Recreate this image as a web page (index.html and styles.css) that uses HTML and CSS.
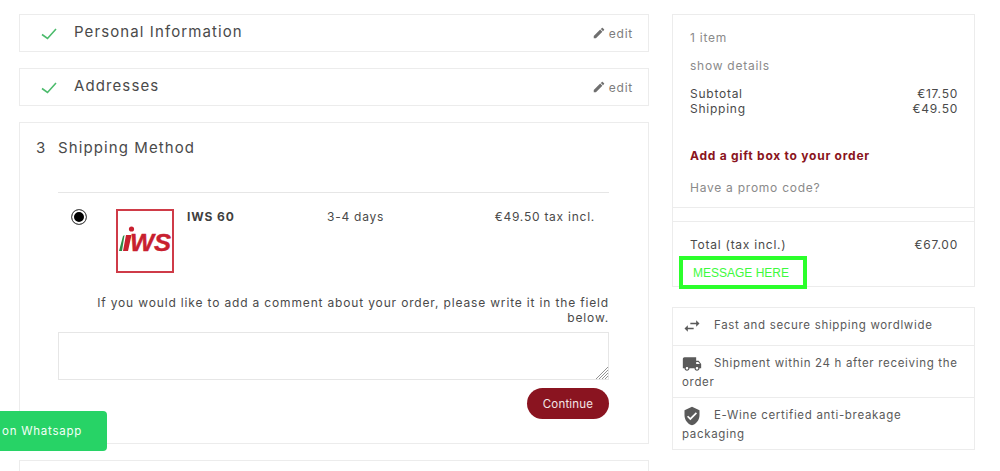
FILE: index.html
```html
<!DOCTYPE html>
<html lang="en">
<head>
    <meta charset="UTF-8">
    <meta name="viewport" content="width=device-width, initial-scale=1.0">
    <title>Checkout</title>
    <link rel="stylesheet" href="styles.css">
</head>
<body>
    <div class="checkout">
        <div class="steps">
            <section class="step step-done">
                <svg class="check" viewBox="0 0 16 12"><polyline points="1,6.5 6.5,10.5 15,1"/></svg>
                <h2>Personal Information</h2>
                <a href="#" class="edit"><svg viewBox="0 0 24 24"><path d="M3 17.25V21h3.75L17.81 9.94l-3.75-3.75L3 17.25zM20.71 7.04c.39-.39.39-1.02 0-1.41l-2.34-2.34c-.39-.39-1.02-.39-1.41 0l-1.83 1.83 3.75 3.75 1.83-1.83z"/></svg>edit</a>
            </section>
            <section class="step step-done">
                <svg class="check" viewBox="0 0 16 12"><polyline points="1,6.5 6.5,10.5 15,1"/></svg>
                <h2>Addresses</h2>
                <a href="#" class="edit"><svg viewBox="0 0 24 24"><path d="M3 17.25V21h3.75L17.81 9.94l-3.75-3.75L3 17.25zM20.71 7.04c.39-.39.39-1.02 0-1.41l-2.34-2.34c-.39-.39-1.02-.39-1.41 0l-1.83 1.83 3.75 3.75 1.83-1.83z"/></svg>edit</a>
            </section>
            <section class="step step-open">
                <h2><span class="step-num">3</span>Shipping Method</h2>
                <div class="carrier">
                    <span class="radio"></span>
                    <svg class="carrier-logo" viewBox="0 0 58 64">
                        <rect x="1" y="1" width="56" height="62" fill="#fff" stroke="#cf3b48" stroke-width="2"/>
                        <circle cx="15.5" cy="20" r="2.6" fill="#c8202f"/>
                        <polygon points="3,42 7,27 8.5,26 6,42" fill="#2d8c46"/>
                        <polygon points="7,42 10,26 15.5,26 12,42" fill="#c8202f"/>
                        <text x="14" y="42" class="logo-text" textLength="41" lengthAdjust="spacingAndGlyphs">WS</text>
                    </svg>
                    <strong class="carrier-name">IWS 60</strong>
                    <span class="carrier-delay">3-4 days</span>
                    <span class="carrier-price">€49.50 tax incl.</span>
                </div>
                <p class="comment-label">If you would like to add a comment about your order, please write it in the field below.</p>
                <div class="comment-wrap">
                    <textarea class="comment"></textarea>
                    <svg class="grip" viewBox="0 0 12 12"><path d="M0 12L12 0M3 12L12 3M6 12L12 6M9 12L12 9"/></svg>
                </div>
                <div class="actions"><button class="btn-continue">Continue</button></div>
            </section>
            <section class="step step-next"></section>
        </div>

        <aside class="sidebar">
            <div class="summary">
                <div class="summary-top">
                    <p class="muted item-count">1 item</p>
                    <p class="muted show-details">show details</p>
                    <div class="line"><span>Subtotal</span><span>€17.50</span></div>
                    <div class="line"><span>Shipping</span><span>€49.50</span></div>
                    <p class="gift">Add a gift box to your order</p>
                    <p class="muted promo">Have a promo code?</p>
                </div>
                <div class="summary-gap"></div>
                <div class="line total"><span>Total (tax incl.)</span><span>€67.00</span></div>
                <div class="message">MESSAGE HERE</div>
            </div>
            <ul class="reassurance">
                <li><svg viewBox="0 0 24 24"><path d="M6.99 11L3 15l3.99 4v-3H14v-2H6.99v-3zM21 9l-3.99-4v3H10v2h7.01v3L21 9z"/></svg>Fast and secure shipping wordlwide</li>
                <li><svg viewBox="0 0 24 24"><path d="M20 8h-3V4H3c-1.1 0-2 .9-2 2v11h2c0 1.66 1.34 3 3 3s3-1.34 3-3h6c0 1.66 1.34 3 3 3s3-1.34 3-3h2v-5l-3-4zM6 18.5c-.83 0-1.5-.67-1.5-1.5s.67-1.5 1.5-1.5 1.5.67 1.5 1.5-.67 1.5-1.5 1.5zm13.5-9l1.96 2.5H17V9.5h2.5zm-1.5 9c-.83 0-1.5-.67-1.5-1.5s.67-1.5 1.5-1.5 1.5.67 1.5 1.5-.67 1.5-1.5 1.5z"/></svg>Shipment within 24 h after receiving the order</li>
                <li><svg viewBox="0 0 24 24"><path d="M12 1L3 5v6c0 5.55 3.84 10.74 9 12 5.16-1.26 9-6.45 9-12V5l-9-4zm-2 16l-4-4 1.41-1.41L10 14.17l6.59-6.59L18 9l-8 8z"/></svg>E-Wine certified anti-breakage packaging</li>
            </ul>
        </aside>
    </div>

    <a href="#" class="whatsapp">on Whatsapp</a>
</body>
</html>
```

FILE: styles.css
```css
* {
    margin: 0;
    padding: 0;
    box-sizing: border-box;
}

html, body {
    height: 100%;
    overflow: hidden;
}

body {
    background: #fff;
    color: #4a4a4a;
    font-family: 'Inter', 'Open Sans', sans-serif;
    font-size: 12px;
    letter-spacing: 0.75px;
}

.checkout {
    display: flex;
    gap: 23px;
    padding: 14px 0 0 19px;
}

/* Left column */
.steps {
    width: 630px;
    display: flex;
    flex-direction: column;
    gap: 16px;
}

.step {
    border: 1px solid #ececec;
}

.step h2 {
    font-size: 15px;
    font-weight: 400;
    letter-spacing: 1.1px;
}

.step-done {
    height: 38px;
    display: flex;
    align-items: center;
    padding: 0 15px 0 21px;
}

.step-done h2 {
    margin-bottom: 3px;
}

.check {
    width: 16px;
    height: 12px;
    margin-right: 17px;
    margin-top: 2px;
    fill: none;
    stroke: #4cbb6c;
    stroke-width: 1.6;
}

.edit {
    margin-left: auto;
    display: flex;
    align-items: center;
    gap: 3px;
    color: #7d7d7d;
    text-decoration: none;
}

.edit svg {
    width: 14px;
    height: 14px;
    fill: #6f6f6f;
}

.step-open {
    height: 322px;
    padding: 15px 39px 0 38px;
}

.step-open h2 {
    margin-left: -22px;
    line-height: 20px;
}

.step-num {
    display: inline-block;
    width: 22px;
}

.carrier {
    margin-top: 34px;
    border-top: 1px solid #e6e6e6;
    height: 99px;
    padding-top: 16px;
    display: flex;
    align-items: flex-start;
}

.radio {
    width: 16px;
    height: 16px;
    margin: 0 0 0 13px;
    border: 1px solid #555;
    border-radius: 50%;
    background: #000;
    box-shadow: inset 0 0 0 2px #fff;
}

.carrier-logo {
    width: 58px;
    height: 64px;
    margin-left: 29px;
}

.logo-text {
    font-family: 'Liberation Sans', sans-serif;
    font-weight: 700;
    font-style: italic;
    font-size: 23px;
    letter-spacing: 0;
    fill: #c8202f;
    stroke: #c8202f;
    stroke-width: 0.4;
}

.carrier-name {
    width: 140px;
    margin-left: 13px;
    color: #3f3f3f;
    letter-spacing: 0.9px;
    line-height: 16px;
}

.carrier-delay {
    line-height: 16px;
}

.carrier-price {
    margin-left: auto;
    margin-right: 14px;
    line-height: 16px;
}

.comment-label {
    text-align: right;
    line-height: 15px;
    margin-top: 4px;
    letter-spacing: 0.84px;
}

.comment-wrap {
    position: relative;
    margin-top: 7px;
}

.comment {
    display: block;
    width: 100%;
    height: 48px;
    border: 1px solid #e6e6e6;
    background: #fff;
    resize: none;
}

.grip {
    position: absolute;
    right: 1px;
    bottom: 1px;
    width: 12px;
    height: 12px;
    fill: none;
    stroke: #777;
    stroke-width: 0.8;
}

.actions {
    display: flex;
    justify-content: flex-end;
    margin-top: 8px;
}

.btn-continue {
    width: 82px;
    height: 31px;
    border: 0;
    border-radius: 16px;
    background: #8a1420;
    color: #f3e6e7;
    font-family: inherit;
    font-size: 11.5px;
    letter-spacing: 0.2px;
}

.step-next {
    height: 11px;
    border-bottom: 0;
}

/* Right column */
.sidebar {
    width: 303px;
}

.summary {
    height: 273px;
    border: 1px solid #ececec;
    position: relative;
}

.summary-top {
    height: 193px;
    padding: 15px 16px 0 17px;
    border-bottom: 1px solid #ececec;
}

.muted {
    color: #8a8a8a;
    line-height: 16px;
}

.show-details {
    margin-top: 12px;
    margin-bottom: 12px;
}

.line {
    display: flex;
    justify-content: space-between;
    line-height: 15px;
}

.gift {
    margin-top: 32px;
    color: #8a1420;
    font-weight: 700;
    line-height: 16px;
}

.promo {
    margin-top: 16px;
}

.summary-gap {
    height: 14px;
    border-bottom: 1px solid #ececec;
}

.total {
    margin: 15px 16px 0 17px;
}

.message {
    position: absolute;
    left: 6px;
    top: 241px;
    width: 128px;
    height: 33px;
    padding-left: 10px;
    border: 4px solid #2bff2b;
    background: #fff;
    color: #3dfa3d;
    font-family: 'Liberation Sans', sans-serif;
    font-size: 12px;
    letter-spacing: 0;
    line-height: 26px;
}

.reassurance {
    list-style: none;
    margin-top: 20px;
    border: 1px solid #ececec;
    font-size: 11.5px;
    color: #5a5a5a;
    letter-spacing: 0.68px;
}

.reassurance li {
    padding: 8px 9px 5px 9px;
    line-height: 19px;
    border-top: 1px solid #ececec;
}

.reassurance li:first-child {
    padding: 8px 9px 10px 9px;
    border-top: 0;
}

.reassurance svg {
    width: 20px;
    height: 20px;
    margin: -4px 12px -4px 0;
    vertical-align: middle;
    fill: #5a5a5a;
}

/* Whatsapp tab */
.whatsapp {
    position: fixed;
    left: 0;
    top: 411px;
    width: 107px;
    height: 40px;
    padding-left: 2px;
    background: #27d366;
    border-radius: 0 4px 4px 0;
    color: #f4fff8;
    text-decoration: none;
    font-size: 11.5px;
    line-height: 40px;
    white-space: nowrap;
}
```
